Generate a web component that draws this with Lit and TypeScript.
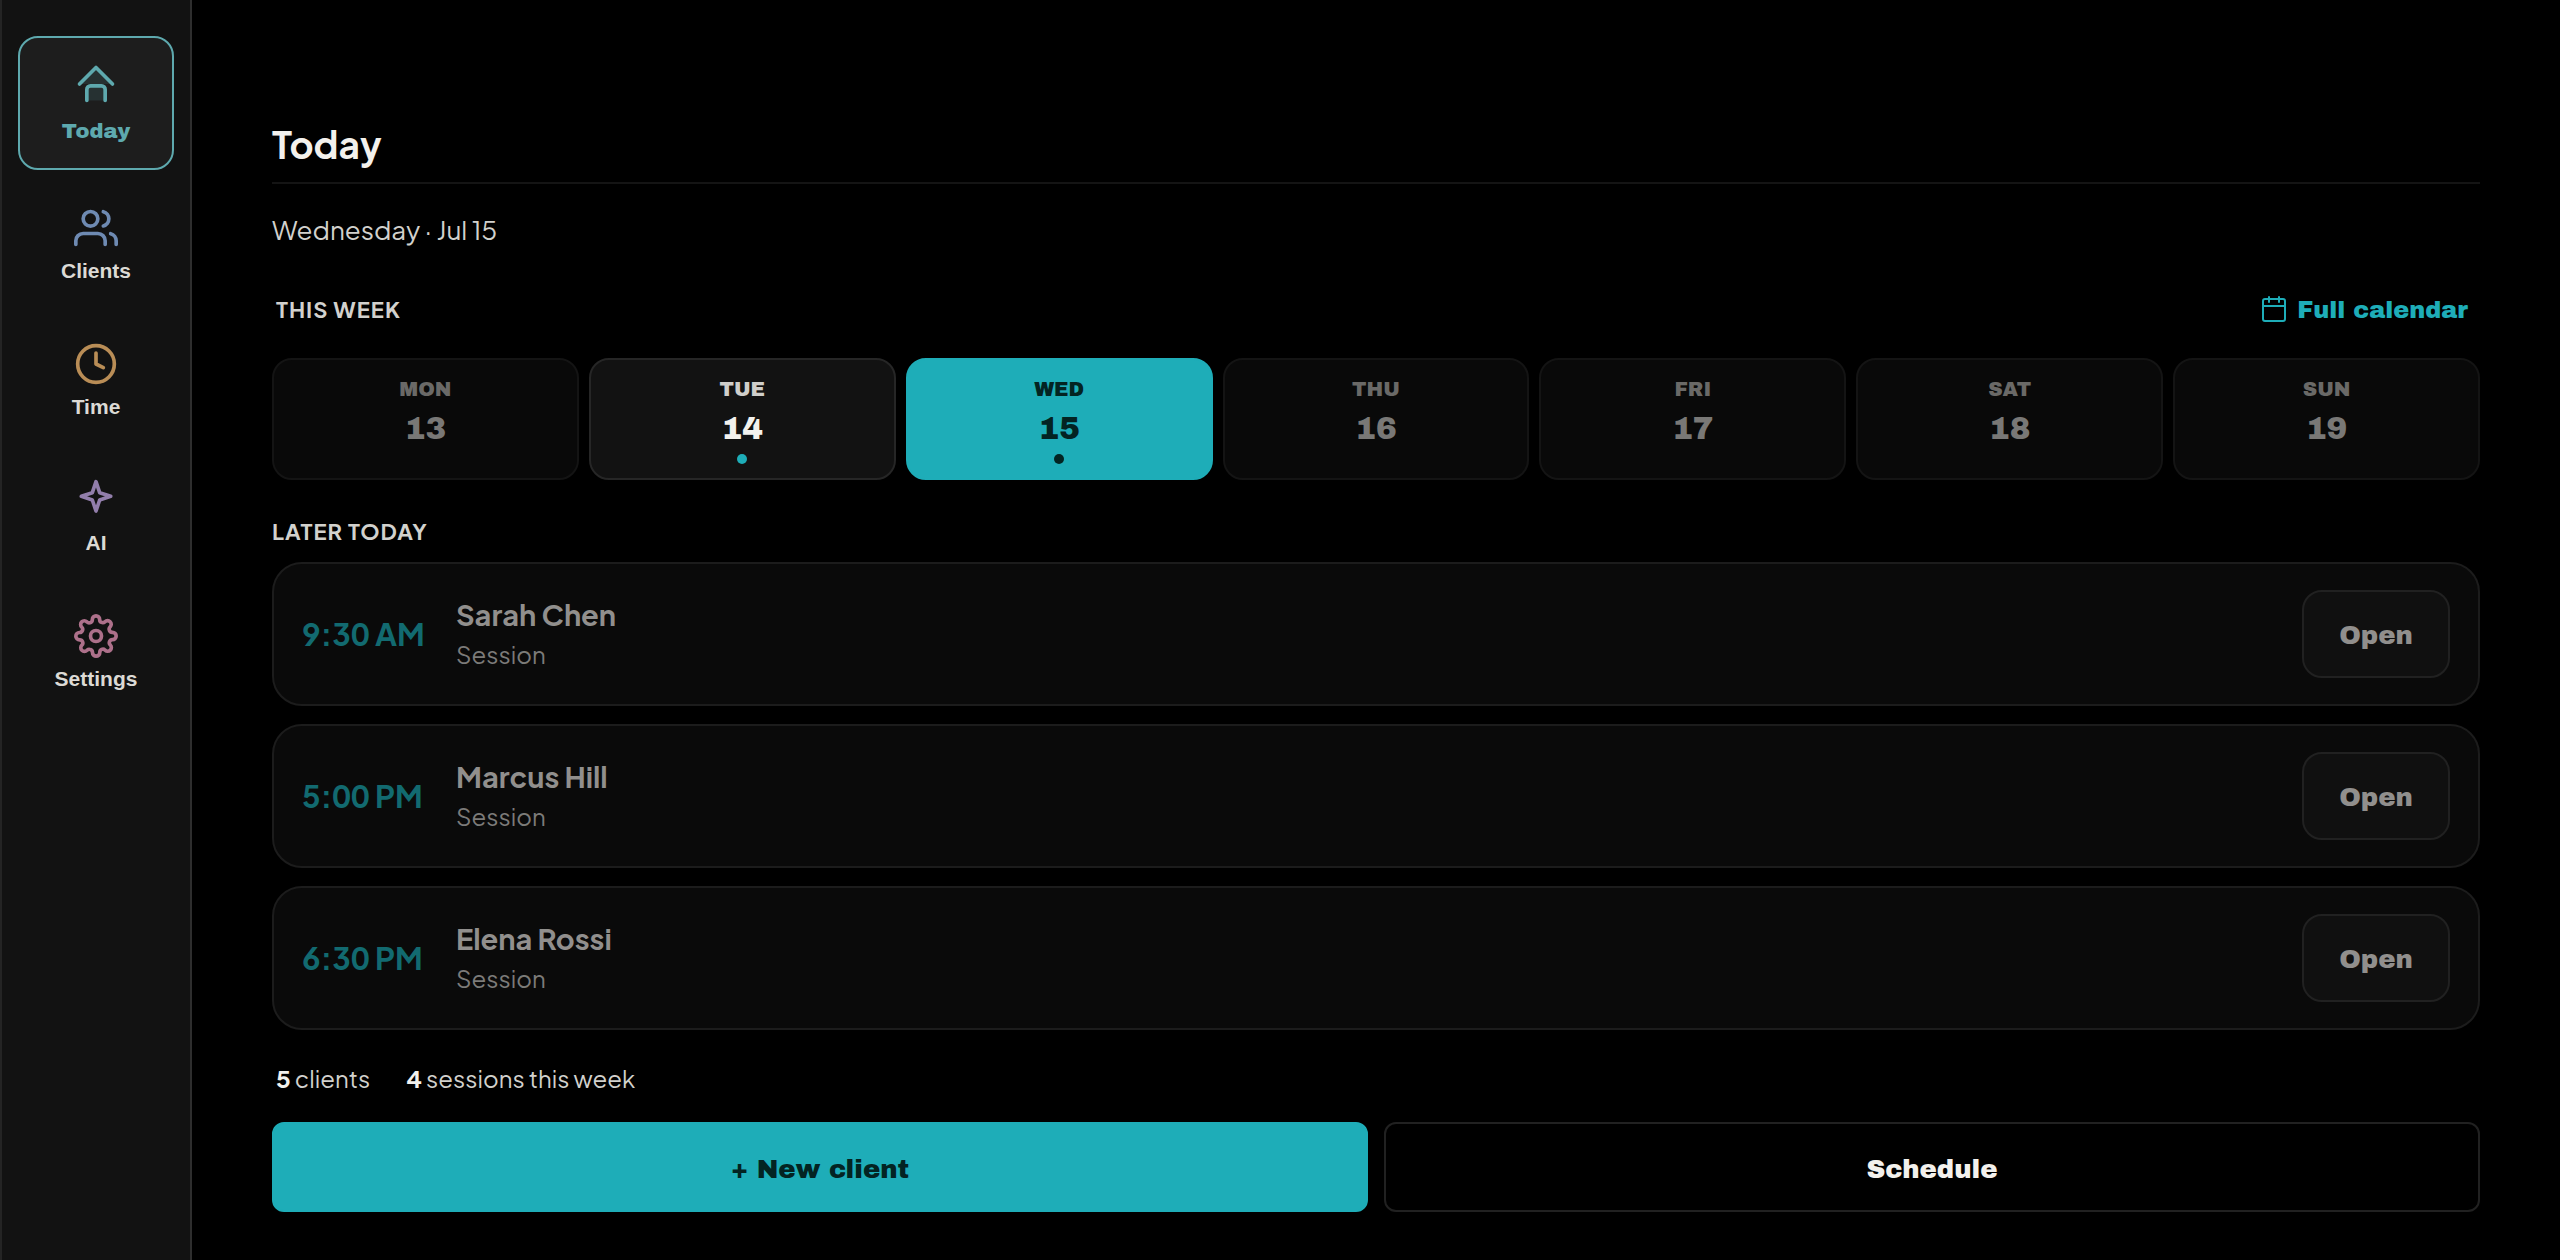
import { LitElement, html, css, svg, TemplateResult } from "lit";
import { customElement, property } from "lit/decorators.js";
import { classMap } from "lit/directives/class-map.js";

interface NavItem {
  id: string;
  label: string;
  icon: TemplateResult;
}

interface Day {
  name: string;
  date: number;
  state: "idle" | "busy" | "today";
}

interface Session {
  time: string;
  client: string;
  kind: string;
}

const NAV: NavItem[] = [
  {
    id: "today",
    label: "Today",
    icon: svg`
      <path d="M3 12l9-9 9 9z" fill="currentColor" fill-opacity="0.15" stroke="none" />
      <path d="M3 12l9-9 9 9" />
      <path d="M7 21v-6a2 2 0 0 1 2-2h6a2 2 0 0 1 2 2v6" fill="currentColor" fill-opacity="0.15" />`,
  },
  {
    id: "clients",
    label: "Clients",
    icon: svg`
      <path d="M17 21v-2a4 4 0 0 0-4-4H5a4 4 0 0 0-4 4v2" />
      <circle cx="9" cy="7" r="4" />
      <path d="M23 21v-2a4 4 0 0 0-3-3.87" />
      <path d="M16 3.13a4 4 0 0 1 0 7.75" />`,
  },
  {
    id: "time",
    label: "Time",
    icon: svg`<circle cx="12" cy="12" r="10" /><path d="M12 6v6l4 2" />`,
  },
  {
    id: "ai",
    label: "AI",
    icon: svg`<path d="M12 2l2 6 6 2-6 2-2 6-2-6-6-2 6-2z" />`,
  },
  {
    id: "settings",
    label: "Settings",
    icon: svg`
      <circle cx="12" cy="12" r="3" />
      <path d="M19.4 15a1.65 1.65 0 0 0 .33 1.82l.06.06a2 2 0 0 1 0 2.83 2 2 0 0 1-2.83 0l-.06-.06a1.65 1.65 0 0 0-1.82-.33 1.65 1.65 0 0 0-1 1.51V21a2 2 0 0 1-2 2 2 2 0 0 1-2-2v-.09A1.65 1.65 0 0 0 9 19.4a1.65 1.65 0 0 0-1.82.33l-.06.06a2 2 0 0 1-2.83 0 2 2 0 0 1 0-2.83l.06-.06a1.65 1.65 0 0 0 .33-1.82 1.65 1.65 0 0 0-1.51-1H3a2 2 0 0 1-2-2 2 2 0 0 1 2-2h.09A1.65 1.65 0 0 0 4.6 9a1.65 1.65 0 0 0-.33-1.82l-.06-.06a2 2 0 0 1 0-2.83 2 2 0 0 1 2.83 0l.06.06a1.65 1.65 0 0 0 1.82.33H9a1.65 1.65 0 0 0 1-1.51V3a2 2 0 0 1 2-2 2 2 0 0 1 2 2v.09a1.65 1.65 0 0 0 1 1.51 1.65 1.65 0 0 0 1.82-.33l.06-.06a2 2 0 0 1 2.83 0 2 2 0 0 1 0 2.83l-.06.06a1.65 1.65 0 0 0-.33 1.82V9a1.65 1.65 0 0 0 1.51 1H21a2 2 0 0 1 2 2 2 2 0 0 1-2 2h-.09a1.65 1.65 0 0 0-1.51 1z" />`,
  },
];

const DAYS: Day[] = [
  { name: "MON", date: 13, state: "idle" },
  { name: "TUE", date: 14, state: "busy" },
  { name: "WED", date: 15, state: "today" },
  { name: "THU", date: 16, state: "idle" },
  { name: "FRI", date: 17, state: "idle" },
  { name: "SAT", date: 18, state: "idle" },
  { name: "SUN", date: 19, state: "idle" },
];

const SESSIONS: Session[] = [
  { time: "9:30 AM", client: "Sarah Chen", kind: "Session" },
  { time: "5:00 PM", client: "Marcus Hill", kind: "Session" },
  { time: "6:30 PM", client: "Elena Rossi", kind: "Session" },
];

@customElement("side-nav")
export class SideNav extends LitElement {
  @property() current = "today";

  static styles = css`
    :host {
      display: block;
      box-sizing: border-box;
      background: #121212;
      border-left: 2px solid #242424;
      border-right: 2px solid #2e2e2e;
      padding: 36px 16px;
    }
    nav {
      display: flex;
      flex-direction: column;
      gap: 2px;
    }
    .item {
      display: flex;
      flex-direction: column;
      align-items: center;
      gap: 8px;
      padding: 32px 0 20px;
      border: 2px solid transparent;
      border-radius: 20px;
      font: 700 21px/26px "Liberation Sans", Arial, sans-serif;
      color: #dcdad5;
      text-decoration: none;
    }
    .item.active {
      gap: 12px;
      padding: 24px 0;
      background: #1d1d1d;
      border-color: #5ea9ae;
      font-family: "Archivo Black", "Arial Black", "Liberation Sans", sans-serif;
      font-weight: 400;
      color: #5ea9ae;
    }
    svg {
      width: 44px;
      height: 44px;
      fill: none;
      stroke: currentColor;
      stroke-width: 2;
      stroke-linecap: round;
      stroke-linejoin: round;
    }
    .today { color: #5ea9ae; }
    .clients { color: #6e8ab2; }
    .time { color: #b98d56; }
    .ai { color: #927eab; }
    .settings { color: #ad708a; }
  `;

  render() {
    return html`<nav aria-label="Main">
      ${NAV.map((item) => {
        const active = item.id === this.current;
        return html`<a
          class=${classMap({ item: true, active })}
          href="#${item.id}"
          aria-current=${active ? "page" : "false"}
        >
          <svg class=${item.id} viewBox="0 0 24 24" aria-hidden="true">${item.icon}</svg>
          <span>${item.label}</span>
        </a>`;
      })}
    </nav>`;
  }
}

@customElement("week-strip")
export class WeekStrip extends LitElement {
  static styles = css`
    :host {
      display: grid;
      grid-template-columns: repeat(7, minmax(0, 1fr));
      gap: 10px;
    }
    .day {
      display: flex;
      flex-direction: column;
      align-items: center;
      box-sizing: border-box;
      margin: 0;
      padding: 17px 0 14px;
      border: 2px solid #141414;
      border-radius: 20px;
      background: #090909;
      color: #797876;
      font-family: "Archivo Black", "Arial Black", "Liberation Sans", sans-serif;
      font-weight: 400;
    }
    .name {
      font-size: 20px;
      line-height: 24px;
      color: #6a6967;
    }
    .date {
      margin-top: 10px;
      font-size: 31px;
      line-height: 36px;
    }
    .dot {
      width: 10px;
      height: 10px;
      margin-top: 7px;
      border-radius: 50%;
    }
    .busy {
      background: #121212;
      border-color: #262626;
      color: #f3f1ed;
    }
    .busy .name { color: #cfceca; }
    .busy .dot { background: #1eadb8; }
    .today {
      background: #1eadb8;
      border-color: #1eadb8;
      color: #032422;
    }
    .today .name { color: #032422; }
    .today .dot { background: #032422; }
  `;

  render() {
    return DAYS.map(
      (d) => html`<button class="day ${d.state}" type="button">
        <span class="name">${d.name}</span>
        <span class="date">${d.date}</span>
        <span class="dot"></span>
      </button>`
    );
  }
}

@customElement("session-card")
export class SessionCard extends LitElement {
  @property({ attribute: false }) session!: Session;

  static styles = css`
    :host {
      display: flex;
      align-items: center;
      gap: 24px;
      box-sizing: border-box;
      padding: 26px 28px;
      border: 2px solid #1c1c1c;
      border-radius: 30px;
      background: #0a0a0a;
    }
    .time {
      min-width: 130px;
      font-size: 31px;
      font-weight: 700;
      line-height: 40px;
      font-variant-numeric: tabular-nums;
      white-space: nowrap;
      color: #126a70;
    }
    .who {
      display: flex;
      flex: 1;
      flex-direction: column;
      gap: 5px;
      min-width: 0;
      padding-bottom: 2px;
    }
    .client {
      font-size: 29px;
      font-weight: 700;
      line-height: 36px;
      color: #918f8d;
    }
    .kind {
      font-size: 24px;
      line-height: 34px;
      color: #7c7b79;
    }
    .open {
      min-width: 148px;
      margin: 0;
      padding: 26px 34px 24px;
      border: 2px solid #212121;
      border-radius: 20px;
      background: #101010;
      color: #918f8d;
      font: 400 26px/34px "Archivo Black", "Arial Black", "Liberation Sans", sans-serif;
    }
  `;

  render() {
    const { time, client, kind } = this.session;
    return html`
      <time class="time">${time}</time>
      <div class="who">
        <span class="client">${client}</span>
        <span class="kind">${kind}</span>
      </div>
      <button class="open" type="button" aria-label="Open ${client}">Open</button>
    `;
  }
}

@customElement("app-root")
export class AppRoot extends LitElement {
  static styles = css`
    :host {
      display: grid;
      grid-template-columns: 192px minmax(0, 1fr);
      min-height: 100vh;
      background: #000;
      color: #d2d1cd;
      font-family: "Plus Jakarta Sans", Inter, "Liberation Sans", sans-serif;
    }
    main {
      display: flex;
      flex-direction: column;
      padding: 120px 80px 48px;
    }
    h1, h2, p, ul {
      margin: 0;
      padding: 0;
    }
    h1 {
      padding-bottom: 14px;
      border-bottom: 2px solid #141414;
      font-size: 37px;
      font-weight: 700;
      line-height: 48px;
      color: #f3f1ed;
    }
    .date {
      margin-top: 28px;
      font-size: 26px;
      line-height: 36px;
    }
    h2 {
      font-size: 22px;
      font-weight: 700;
      line-height: 28px;
      letter-spacing: 1px;
    }
    .week-head {
      display: flex;
      align-items: center;
      justify-content: space-between;
      margin-top: 46px;
      padding: 0 12px 0 4px;
    }
    .calendar {
      display: flex;
      align-items: center;
      gap: 9px;
      color: #1eadb8;
      font: 400 24px/28px "Archivo Black", "Arial Black", "Liberation Sans", sans-serif;
      text-decoration: none;
    }
    .calendar span { padding-top: 2px; }
    .calendar svg {
      width: 28px;
      height: 28px;
      fill: none;
      stroke: currentColor;
      stroke-width: 2;
      stroke-linecap: round;
      stroke-linejoin: round;
    }
    week-strip { margin-top: 34px; }
    .later { margin-top: 37px; }
    .sessions {
      display: flex;
      flex-direction: column;
      gap: 18px;
      margin-top: 17px;
      list-style: none;
    }
    .stats {
      display: flex;
      gap: 36px;
      margin-top: 32px;
      padding: 0 4px;
      font-size: 24px;
      line-height: 32px;
    }
    .stats strong {
      font-weight: 700;
      color: #f3f1ed;
    }
    .actions {
      display: grid;
      grid-template-columns: 1fr 1fr;
      gap: 16px;
      margin-top: 28px;
    }
    .action {
      margin: 0;
      padding: 28px 0 24px;
      border: 2px solid #212121;
      border-radius: 12px;
      background: #000;
      color: #f3f1ed;
      font: 400 26px/34px "Archivo Black", "Arial Black", "Liberation Sans", sans-serif;
    }
    .primary {
      border-color: #1eadb8;
      background: #1eadb8;
      color: #032422;
    }
  `;

  render() {
    return html`
      <side-nav current="today"></side-nav>
      <main>
        <h1>Today</h1>
        <p class="date">Wednesday · Jul 15</p>
        <div class="week-head">
          <h2>THIS WEEK</h2>
          <a class="calendar" href="#calendar">
            <svg viewBox="0 0 28 28" aria-hidden="true">
              <rect x="3" y="4" width="22" height="22" rx="2" />
              <path d="M3 11h22M9 2v5M19 2v5" />
            </svg>
            <span>Full calendar</span>
          </a>
        </div>
        <week-strip></week-strip>
        <h2 class="later">LATER TODAY</h2>
        <ul class="sessions">
          ${SESSIONS.map((s) => html`<li><session-card .session=${s}></session-card></li>`)}
        </ul>
        <div class="stats">
          <span><strong>5</strong> clients</span>
          <span><strong>4</strong> sessions this week</span>
        </div>
        <div class="actions">
          <button class="action primary" type="button">+ New client</button>
          <button class="action" type="button">Schedule</button>
        </div>
      </main>
    `;
  }
}
